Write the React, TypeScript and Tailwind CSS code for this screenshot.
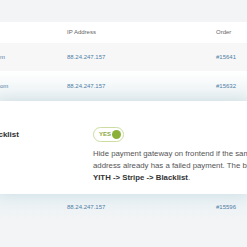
import React from 'react';

const rows = [
  { email: 'm', ip: '88.24.247.157', order: '#15641', bg: 'bg-[#f7f7f7]' },
  { email: 'om', ip: '88.24.247.157', order: '#15632', bg: 'bg-gradient-to-b from-white to-[#eaf1f3]' },
];

function Row({ email, ip, order, bg, h }: { email: string; ip: string; order: string; bg: string; h: string }) {
  return (
    <div className={`flex items-center text-[6px] text-[#4f7fa6] ${bg} ${h}`}>
      <div className="w-[67px] shrink-0">{email}</div>
      <div className="w-[149px] shrink-0">{ip}</div>
      <div>{order}</div>
    </div>
  );
}

export default function App() {
  return (
    <div className="h-[247px] w-[247px] overflow-hidden bg-[#f3f4f5] font-['Liberation_Sans',Arial,sans-serif]">
      <div className="h-[22px]" />
      <div className="flex h-[21px] items-center bg-white text-[6px] text-[#666]">
        <div className="w-[67px] shrink-0" />
        <div className="w-[149px] shrink-0">IP Address</div>
        <div>Order</div>
      </div>
      <Row {...rows[0]} h="h-[28px]" />
      <Row {...rows[1]} h="h-[30px]" />
      <div className="relative z-10 flex h-[93px] bg-white pt-[26px] shadow-[0_0_14px_rgba(120,160,180,0.25)]">
        <div className="w-[93px] shrink-0 overflow-hidden pt-[2px]">
          <div className="ml-[-14px] text-[8px] font-bold text-[#2f2f2f]">Blacklist</div>
        </div>
        <div className="min-w-0 flex-1">
          <div className="flex h-[15px] w-[31px] items-center justify-between rounded-full border border-[#cddca3] pl-[5px] pr-[2px]">
            <span className="text-[6px] font-bold text-[#8aa83a]">YES</span>
            <span className="h-[9px] w-[9px] rounded-full bg-[#8ab03a]" />
          </div>
          <p className="mt-[6px] whitespace-nowrap text-[7.8px] leading-[12px] text-[#555]">
            Hide payment gateway on frontend if the same IP
            <br />
            address already has a failed payment. The blacklist is in
            <br />
            <b className="text-[#333]">YITH -&gt; Stripe -&gt; Blacklist</b>.
          </p>
        </div>
      </div>
      <Row email="" ip="88.24.247.157" order="#15596" bg="bg-gradient-to-b from-[#e9f2f5] to-[#f3f4f5]" h="h-[27px]" />
    </div>
  );
}
